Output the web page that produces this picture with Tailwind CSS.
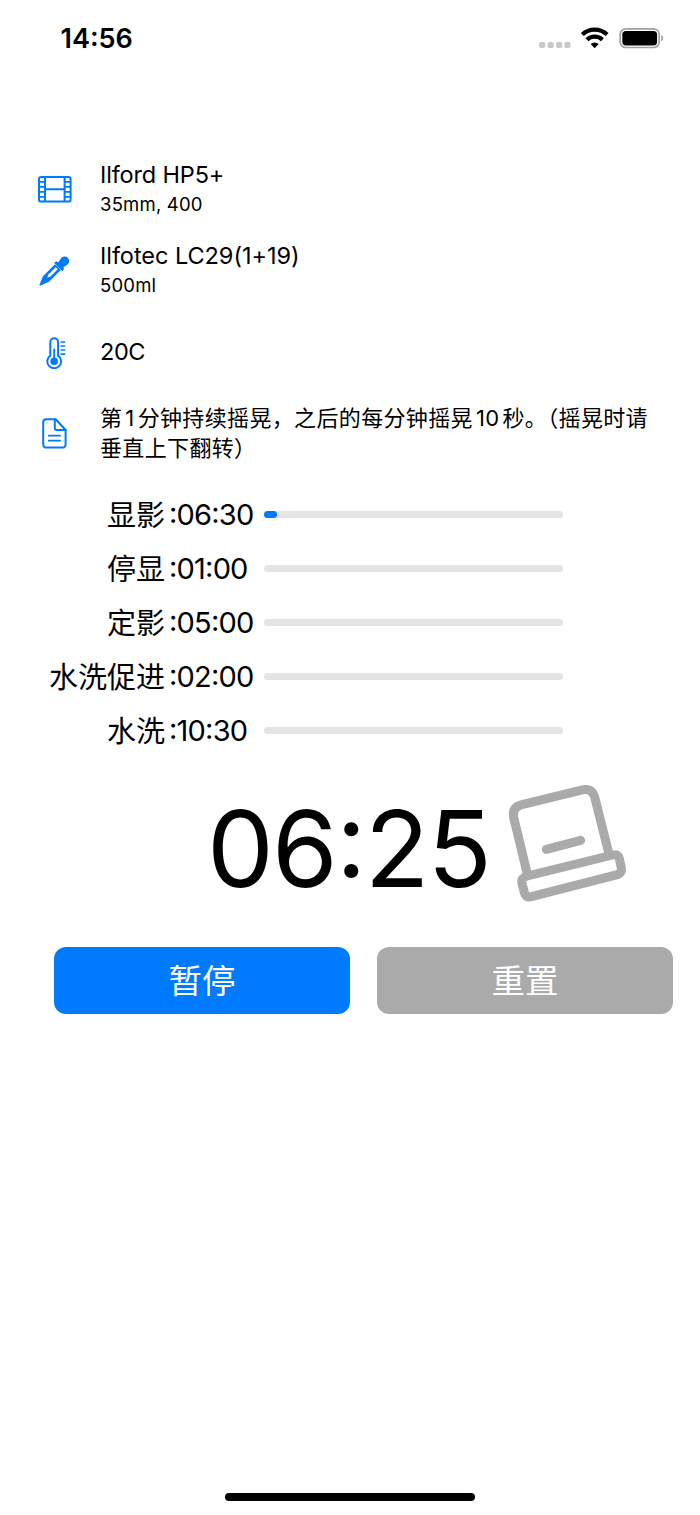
<!DOCTYPE html>
<html lang="zh-CN">
<head>
  <meta charset="UTF-8" />
  <meta name="viewport" content="width=device-width, initial-scale=1.0"/>
  <title>Ilford HP5+</title>
  <script src="https://cdn.jsdelivr.net/npm/@tailwindcss/browser@4"></script>
</head>
<body class="bg-white text-black font-['Inter','Noto_Sans_CJK_SC',sans-serif] w-[700px] h-[1515px] overflow-hidden flex flex-col">

  <!-- Status bar -->
  <header class="h-[149px] shrink-0 flex items-start justify-between pl-[60.5px] pr-[36px] pt-[18px]">
    <span class="text-[27px] leading-[42px] font-semibold">14<span class="leading-none align-[2px]">:</span>56</span>
    <div class="flex items-center h-10">
      <svg class="w-[126px] h-10" viewBox="0 0 126 40">
        <g fill="#c8c8c8">
          <rect x="1" y="24" width="6.3" height="6" rx="2"/>
          <rect x="9.5" y="24" width="6.3" height="6" rx="2"/>
          <rect x="18" y="24" width="6.3" height="6" rx="2"/>
          <rect x="26.3" y="24" width="6.3" height="6" rx="2"/>
        </g>
        <g fill="none" stroke="#000" stroke-width="4.2">
          <path d="M44.3 16.6a18 18 0 0 1 24.8 0"/>
          <path d="M49 21.7a11.2 11.2 0 0 1 15.4 0"/>
        </g>
        <path d="M52.7 26.1a6 6 0 0 1 8 0l-4 4.2z"/>
        <rect x="82.2" y="10.9" width="39" height="18.6" rx="5.5" fill="none" stroke="#a0a0a0" stroke-width="1.7"/>
        <rect x="84.3" y="13" width="34.8" height="14.4" rx="3.6"/>
        <path d="M123.2 17v6.2c2.6-1 2.6-5.2 0-6.2z" fill="#a0a0a0"/>
      </svg>
    </div>
  </header>

  <!-- Film, developer, temperature, notes -->
  <ul class="shrink-0">
    <li class="h-[81px] flex items-center">
      <svg class="w-[34px] h-[27px] ml-[38px] mr-[28px]" viewBox="0 0 34 27" fill="none" stroke="#007aff" stroke-width="2">
        <rect x="1" y="1" width="31.6" height="24.6" rx="2.2"/>
        <path d="M7 1v25M26.6 1v25M7 13.3h19.6"/>
        <path d="M1 5.8h6M1 10.8h6M1 15.8h6M1 20.8h6M26.6 5.8h6M26.6 10.8h6M26.6 15.8h6M26.6 20.8h6" stroke-width="1.7"/>
      </svg>
      <div>
        <p class="text-[23.5px] leading-[28px] pb-[2px] tracking-[-0.15px]">Ilford HP5+</p>
        <p class="text-[18.5px] leading-[27px] tracking-[0.2px]">35mm, 400</p>
      </div>
    </li>
    <li class="h-[81px] flex items-center">
      <svg class="w-[30px] h-[30px] ml-[39px] mr-[31px]" viewBox="0 0 30 30">
        <g fill="#007aff">
          <path d="M19.4 6.2l2.2-3.4c1.8-2.6 5.2-3 7.2-1s1.600 5.400-1 7.200l-3.400 2.200c.8 1.200.6 2.200-.4 3.200l-.8.700-8-8 .7-.8c1-1 2.300-1 3.500-.1z"/>
          <path d="M16 8.200L4.700 19.500c-1 1-1.500 2.300-2 4L.6 28.300c-.4.900.2 1.500 1.100 1.100l4.800-2.100c1.700-.5 3-1 4-2L21.800 14z"/>
        </g>
        <path d="M16.700 11.300l2 2-7.200 7.200-3.300 1 1.300-3z" fill="#fff"/>
      </svg>
      <div>
        <p class="text-[23.5px] leading-[28px] pb-[2px] tracking-[-0.05px]">Ilfotec LC29(1+19)</p>
        <p class="text-[18.5px] leading-[27px] tracking-[0.2px]">500ml</p>
      </div>
    </li>
    <li class="h-[82px] flex items-center">
      <svg class="w-[20px] h-[32px] ml-[46px] mr-[34px] mt-[2px]" viewBox="0 0 20 32" fill="none" stroke="#007aff" stroke-linecap="round">
        <path d="M4.300 18.600V5.200a3.900 3.900 0 0 1 7.800 0v13.400a6.900 6.900 0 1 1-7.800 0z" stroke-width="2"/>
        <path d="M8.200 12.400V23" stroke-width="1.900"/>
        <circle cx="8.200" cy="24.300" r="3.800" fill="#007aff" stroke="none"/>
        <path d="M15.300 5h3.200M15.300 9h3.200M15.300 13h3.200M15.300 17.200h3.200" stroke-width="1.700"/>
      </svg>
      <p class="text-[23.5px] leading-[30px] tracking-[-0.4px]">20C</p>
    </li>
    <li class="h-[81px] flex items-center">
      <svg class="w-[26px] h-[31px] ml-[42px] mr-[32px]" viewBox="0 0 26 31" fill="none" stroke="#007aff" stroke-width="2" stroke-linejoin="round" stroke-linecap="round">
        <path d="M13.700 1.200H4.200a3 3 0 0 0-3 3v22.400a3 3 0 0 0 3 3h16.400a3 3 0 0 0 3-3V12z"/>
        <path d="M12.800 1.200v8.800a2 2 0 0 0 2 2h8.800"/>
        <path d="M6.700 17.700h11.400M6.700 22.700h11.400" stroke-width="1.700"/>
      </svg>
      <p class="text-[22px] leading-[30.5px] pb-[1px] tracking-[0.35px] whitespace-nowrap [text-spacing-trim:space-all]">第<span class="mx-[3px]">1</span>分钟持续摇晃，之后的每分钟摇晃<span class="ml-[3px] mr-[3px]">10</span>秒。<span class="[font-feature-settings:'halt']">（</span>摇晃时请<br>垂直上下翻转<span class="[font-feature-settings:'halt']">）</span></p>
    </li>
  </ul>

  <!-- Steps -->
  <ul class="mt-[13px] shrink-0 text-[29px] leading-[50px]">
    <li class="h-[54.1px] flex items-center">
      <span class="w-[165px] pt-[4px] text-right">显影</span>
      <span class="w-[99px] pt-[2px] pl-[4px] tracking-[-0.8px]"><span class="leading-none align-[2px]">:</span>06<span class="leading-none align-[2px]">:</span>30</span>
      <div class="w-[299px] h-[7px] rounded-full bg-[#e4e4e5]"><div class="h-full rounded-full bg-[#007aff]" style="width: 4.5%"></div></div>
    </li>
    <li class="h-[54.1px] flex items-center">
      <span class="w-[165px] pt-[4px] text-right">停显</span>
      <span class="w-[99px] pt-[2px] pl-[4px] tracking-[-0.8px]"><span class="leading-none align-[2px]">:</span>01<span class="leading-none align-[2px]">:</span>00</span>
      <div class="w-[299px] h-[7px] rounded-full bg-[#e4e4e5]"></div>
    </li>
    <li class="h-[54.1px] flex items-center">
      <span class="w-[165px] pt-[4px] text-right">定影</span>
      <span class="w-[99px] pt-[2px] pl-[4px] tracking-[-0.8px]"><span class="leading-none align-[2px]">:</span>05<span class="leading-none align-[2px]">:</span>00</span>
      <div class="w-[299px] h-[7px] rounded-full bg-[#e4e4e5]"></div>
    </li>
    <li class="h-[54.1px] flex items-center">
      <span class="w-[165px] pt-[4px] text-right">水洗促进</span>
      <span class="w-[99px] pt-[2px] pl-[4px] tracking-[-0.8px]"><span class="leading-none align-[2px]">:</span>02<span class="leading-none align-[2px]">:</span>00</span>
      <div class="w-[299px] h-[7px] rounded-full bg-[#e4e4e5]"></div>
    </li>
    <li class="h-[54.1px] flex items-center">
      <span class="w-[165px] pt-[4px] text-right">水洗</span>
      <span class="w-[99px] pt-[2px] pl-[4px] tracking-[-0.8px]"><span class="leading-none align-[2px]">:</span>10<span class="leading-none align-[2px]">:</span>30</span>
      <div class="w-[299px] h-[7px] rounded-full bg-[#e4e4e5]"></div>
    </li>
  </ul>

  <!-- Countdown -->
  <div class="mt-[13px] h-[150px] shrink-0 flex items-center pl-[207px]">
    <span class="w-[283px] pt-[8px] text-[106px] leading-[142px] tracking-[-1.8px] whitespace-nowrap">06<span class="leading-none align-[10px]">:</span>25</span>
    <svg class="w-[150px] h-[150px]" viewBox="0 0 450 450" fill="none" stroke="#aaa" stroke-width="27" stroke-linecap="round" stroke-linejoin="round">
      <path d="M112 312L71 142Q65 112 96 104L280 59Q307 54 315 85L357 252" stroke-linecap="butt"/>
      <path d="M112 318L368 255Q384 251 388 266L394 293Q397 309 382 314L124 380Q108 384 103 368L96 340Q92 323 112 318z"/>
      <path d="M169 238L272 211"/>
    </svg>
  </div>

  <!-- Buttons -->
  <div class="mt-[27px] shrink-0 flex gap-[27px] pl-[54px] text-white text-[33.5px] leading-[62px]">
    <button class="w-[296px] h-[67px] pt-[3px] pb-[2px] rounded-xl bg-[#007aff]">暂停</button>
    <button class="w-[296px] h-[67px] pt-[3px] pb-[2px] rounded-xl bg-[#aaa]">重置</button>
  </div>

  <!-- Home indicator -->
  <div class="mt-auto mb-[14px] mx-auto w-[250px] h-[8px] shrink-0 rounded-full bg-black"></div>

</body>
</html>
